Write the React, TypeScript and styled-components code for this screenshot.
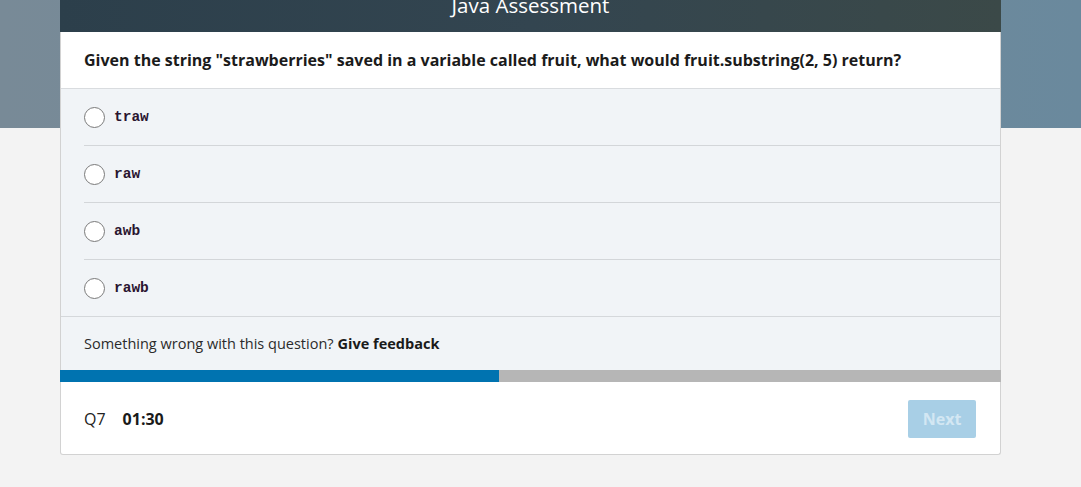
import React from 'react';
import styled, { createGlobalStyle } from 'styled-components';

const GlobalStyle = createGlobalStyle`
  html, body {
    margin: 0;
    padding: 0;
    background: #f3f3f3;
    font-family: 'Open Sans', 'Noto Sans', sans-serif;
    color: #222;
  }
`;

const options = ['traw', 'raw', 'awb', 'rawb'];

const Page = styled.div`
  min-height: 487px;
  overflow: hidden;
  background: linear-gradient(90deg, #788a97 0%, #728a9a 50%, #6a899d 100%) top / 100% 128px no-repeat, #f3f3f3;
`;

const Card = styled.div`
  width: 941px;
  margin: -22px 0 0 60px;
  background: #fff;
  border: 1px solid #d2d2d2;
  border-top: none;
  border-radius: 0 0 3px 3px;
  box-sizing: border-box;
`;

const Header = styled.div`
  height: 54px;
  margin: 0 -1px;
  display: flex;
  align-items: center;
  justify-content: center;
  background: linear-gradient(90deg, #2c3f4b 0%, #334550 50%, #3b4948 100%);
  color: #fff;
  font-size: 20.5px;
`;

const Question = styled.div`
  height: 56px;
  padding: 0 23px;
  display: flex;
  align-items: center;
  font-size: 16px;
  font-weight: 700;
  color: #1b1b1b;
  border-bottom: 1px solid #d9dcdf;
`;

const OptionList = styled.div`
  background: #f1f4f7;
  border-bottom: 1px solid #d5d8db;
`;

const Option = styled.label`
  display: flex;
  align-items: center;
  height: 56px;
  margin-left: 23px;
  gap: 9px;
  border-bottom: 1px solid #d3d6d9;
  &:last-child {
    border-bottom: none;
  }
`;

const Radio = styled.span`
  width: 19px;
  height: 19px;
  border: 1px solid #7a7a7a;
  border-radius: 50%;
  background: #fff;
  flex: none;
`;

const Code = styled.code`
  font-family: 'Liberation Mono', 'Courier New', monospace;
  font-size: 14.5px;
  font-weight: 700;
  color: #2a1530;
`;

const Feedback = styled.div`
  height: 53px;
  padding: 0 23px;
  display: flex;
  align-items: center;
  background: #f1f4f7;
  font-size: 14.5px;
  color: #2b2b2b;
  b {
    margin-left: 4px;
    color: #1a1a1a;
  }
`;

const Progress = styled.div`
  height: 12px;
  margin: 0 -1px;
  background: #b6b6b6;
`;

const ProgressFill = styled.div`
  height: 100%;
  background: #0073b0;
`;

const Footer = styled.div`
  height: 72px;
  padding: 1px 24px 0 23px;
  box-sizing: border-box;
  display: flex;
  align-items: center;
  justify-content: space-between;
`;

const Counter = styled.div`
  display: flex;
  align-items: center;
  gap: 17px;
  font-size: 16px;
  color: #222;
  b {
    color: #1a1a1a;
  }
`;

const NextButton = styled.button`
  width: 68px;
  height: 38px;
  border: none;
  border-radius: 2px;
  background: #a8cfe6;
  color: #d3e7f3;
  font-family: inherit;
  font-size: 16px;
  font-weight: 700;
`;

export default function App() {
  const progress = 7 / 15;
  return (
    <>
      <GlobalStyle />
      <Page>
        <Card>
          <Header>Java Assessment</Header>
          <Question>
            Given the string "strawberries" saved in a variable called fruit, what would fruit.substring(2, 5) return?
          </Question>
          <OptionList>
            {options.map((o) => (
              <Option key={o}>
                <Radio />
                <Code>{o}</Code>
              </Option>
            ))}
          </OptionList>
          <Feedback>
            Something wrong with this question? <b>Give feedback</b>
          </Feedback>
          <Progress>
            <ProgressFill style={{ width: `${progress * 100}%` }} />
          </Progress>
          <Footer>
            <Counter>
              <span>Q7</span>
              <b>01:30</b>
            </Counter>
            <NextButton disabled>Next</NextButton>
          </Footer>
        </Card>
      </Page>
    </>
  );
}
